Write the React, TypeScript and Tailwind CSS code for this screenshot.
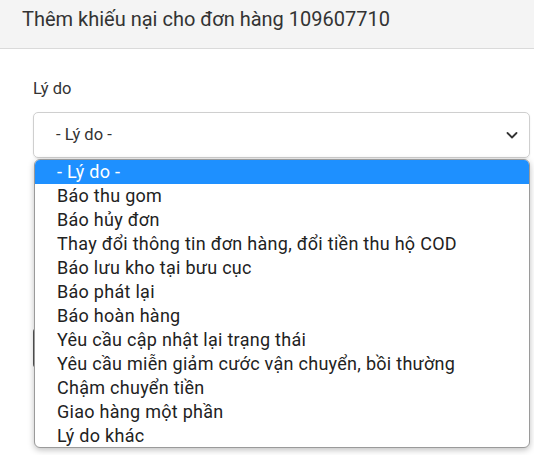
const reasons = [
  "- Lý do -",
  "Báo thu gom",
  "Báo hủy đơn",
  "Thay đổi thông tin đơn hàng, đổi tiền thu hộ COD",
  "Báo lưu kho tại bưu cục",
  "Báo phát lại",
  "Báo hoàn hàng",
  "Yêu cầu cập nhật lại trạng thái",
  "Yêu cầu miễn giảm cước vận chuyển, bồi thường",
  "Chậm chuyển tiền",
  "Giao hàng một phần",
  "Lý do khác",
];

export default function App() {
  return (
    <div className="relative w-[534px] h-[455px] overflow-hidden bg-white text-[#333] font-['Roboto','Liberation_Sans',sans-serif]">
      <div className="h-[49px] bg-[#f4f4f4] border-b border-[#dadada] px-[22px] pt-[5px] text-[20px] leading-[28px]">
        Thêm khiếu nại cho đơn hàng 109607710
      </div>

      <div className="px-[33px] pt-[28px]">
        <div className="text-[16.5px] leading-[24px] text-[#333]">Lý do</div>
        <div className="mt-[11px] h-[46px] w-[497px] rounded-[5px] border border-[#cfcfcf] flex items-center justify-between pl-[22px] pr-[10px] text-[16.5px] shadow-[0_1px_2px_rgba(0,0,0,0.08)]">
          <span>- Lý do -</span>
          <svg width="14" height="10" viewBox="0 0 14 10" fill="none">
            <polyline points="2.5,3 7,7.5 11.5,3" stroke="#333" strokeWidth="1.8" strokeLinecap="round" strokeLinejoin="round" />
          </svg>
        </div>

        <div className="mt-[170px] h-[40px] w-[120px] rounded-[4px] bg-[#555]" />
      </div>

      <ul className="absolute left-[34px] top-[159px] w-[496px] h-[289px] overflow-hidden rounded-[6px] border border-[#9a9a9a] bg-white shadow-[0_2px_6px_rgba(0,0,0,0.25)] text-[18px] leading-[23px] tracking-[0.28px] text-[#222]">
        {reasons.map((r, i) => (
          <li
            key={r}
            className={
              i === 0
                ? "h-[24px] pl-[22px] bg-[#1e90ff] text-white"
                : "h-[24px] pl-[22px]"
            }
          >
            {r}
          </li>
        ))}
      </ul>
    </div>
  );
}
